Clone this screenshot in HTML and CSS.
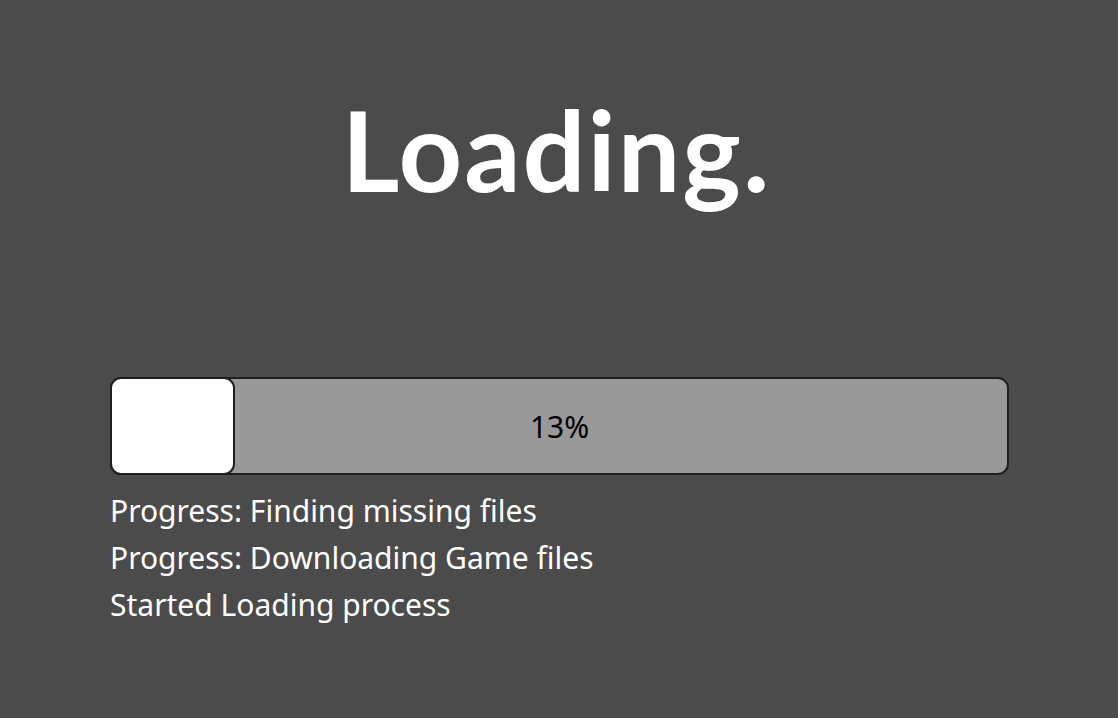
FILE: index.html
```html
<!DOCTYPE html>
<html lang="en">
<head>
<meta charset="utf-8">
<title>Loading</title>
<link rel="stylesheet" href="styles.css">
</head>
<body>
<main class="loader">
  <h1 class="loader-title">Loading.</h1>
  <div class="bar">
    <div class="bar-fill" style="width: 125px"></div>
    <span class="bar-label">13%</span>
  </div>
  <ul class="log">
    <li>Progress: Finding missing files</li>
    <li>Progress: Downloading Game files</li>
    <li>Started Loading process</li>
  </ul>
</main>
</body>
</html>
```

FILE: styles.css
```css
html, body {
  margin: 0;
  height: 100%;
}

body {
  background: #4b4b4b;
  color: #fff;
  font-family: "Noto Sans", "Open Sans", sans-serif;
  font-variant-ligatures: none;
}

.loader {
  display: flex;
  flex-direction: column;
  padding: 0 109px 0 110px;
}

.loader-title {
  margin: 89px 0 0;
  padding-right: 6px;
  text-align: center;
  font-family: "Lato", "Noto Sans", sans-serif;
  font-size: 111px;
  font-weight: 700;
  letter-spacing: 2px;
  line-height: 120px;
}

.bar {
  position: relative;
  margin-top: 168px;
  height: 94px;
  border: 2px solid #1f1f1f;
  border-radius: 11px;
  background: #999;
  display: flex;
  align-items: center;
  justify-content: center;
}

.bar-fill {
  position: absolute;
  left: -2px;
  top: -2px;
  bottom: -2px;
  box-sizing: border-box;
  border: 2px solid #1f1f1f;
  border-radius: 11px;
  background: #fff;
}

.bar-label {
  color: #000;
  font-size: 30px;
}

.log {
  list-style: none;
  margin: 12px 0 0;
  padding: 0;
  font-size: 30px;
  line-height: 47px;
}
```
